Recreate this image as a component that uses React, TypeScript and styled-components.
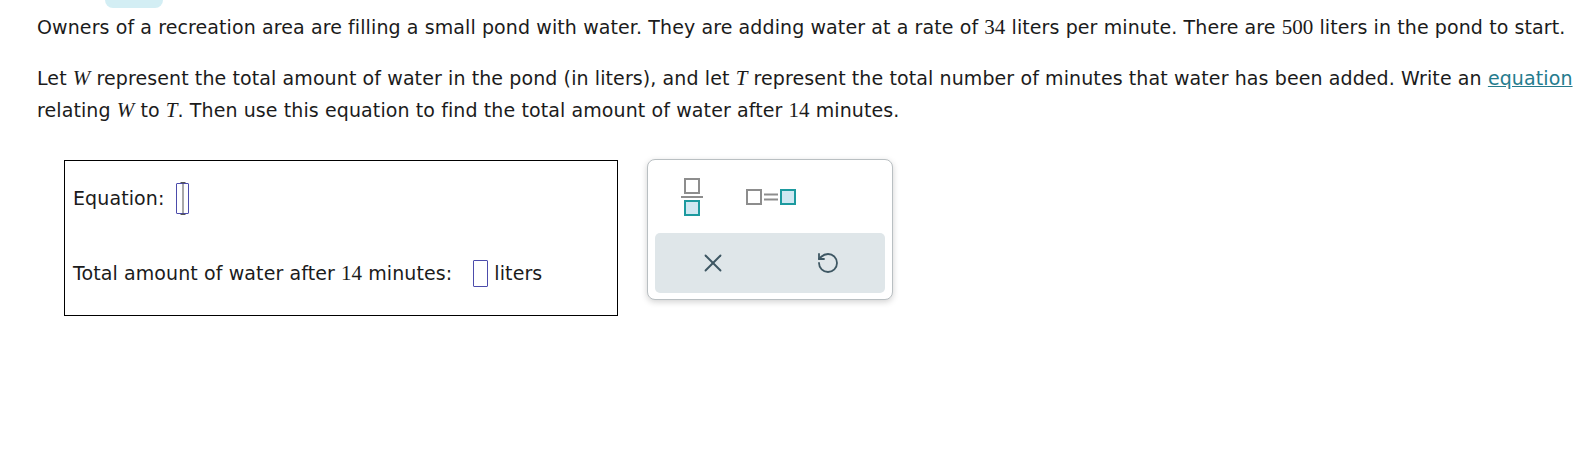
import styled, { createGlobalStyle } from "styled-components";
import { X, RotateCcw } from "lucide-react";

const GlobalStyle = createGlobalStyle`
  html, body {
    margin: 0;
    padding: 0;
    background: #ffffff;
  }
  body {
    font-family: "DejaVu Sans", Verdana, sans-serif;
    color: #1b1b1b;
  }
`;

const Page = styled.div`
  width: 1578px;
  height: 451px;
  overflow: hidden;
  padding-left: 37px;
  box-sizing: border-box;
`;

const TopTab = styled.div`
  width: 58px;
  height: 8px;
  margin-left: 68px;
  border-radius: 0 0 12px 12px;
  background: #d3eef4;
`;

const Question = styled.p<{ $gap?: number }>`
  margin: ${(p) => p.$gap ?? 0}px 0 0 0;
  font-size: 19px;
  letter-spacing: 0.1px;
  line-height: 32px;
  max-width: 1538px;
`;

const M = styled.span<{ $it?: boolean }>`
  font-family: "Liberation Serif", "Times New Roman", serif;
  font-style: ${(p) => (p.$it ? "italic" : "normal")};
  font-size: 21px;
  letter-spacing: 0;
`;

const Link = styled.a`
  color: #257b8d;
  text-decoration: underline;
`;

const AnswerRow = styled.div`
  display: flex;
  align-items: flex-start;
  gap: 29px;
  margin: 34px 0 0 27px;
`;

const AnswerBox = styled.div`
  width: 554px;
  height: 156px;
  box-sizing: border-box;
  border: 1.5px solid #000;
  padding: 21px 0 0 8px;
  font-size: 19px;
  letter-spacing: 0.1px;
`;

const Line = styled.div<{ $gap?: number }>`
  display: flex;
  align-items: center;
  height: 32px;
  margin-top: ${(p) => p.$gap ?? 0}px;
`;

const Blank = styled.span<{ $w: number; $h: number; $ml: number; $mr?: number }>`
  position: relative;
  display: inline-block;
  width: ${(p) => p.$w}px;
  height: ${(p) => p.$h}px;
  margin-left: ${(p) => p.$ml}px;
  margin-right: ${(p) => p.$mr ?? 0}px;
  box-sizing: border-box;
  border: 1.5px solid #4c4cab;
  border-radius: 1px;
`;

const Caret = styled.span`
  position: absolute;
  left: 50%;
  top: -2px;
  bottom: -2px;
  width: 1px;
  background: #555;
  transform: translateX(-50%);
  &::before,
  &::after {
    content: "";
    position: absolute;
    left: -2px;
    width: 5px;
    height: 1px;
    background: #555;
  }
  &::before { top: 0; }
  &::after { bottom: 0; }
`;

const Keypad = styled.div`
  width: 246px;
  height: 141px;
  margin-top: -1px;
  box-sizing: border-box;
  border: 1px solid #b9bfc2;
  border-radius: 8px;
  background: #fff;
  box-shadow: 0 2px 6px rgba(0, 0, 0, 0.18);
  display: flex;
  flex-direction: column;
  padding: 0 7px 6px 7px;
`;

const KeyRow = styled.div`
  flex: 1;
  display: flex;
  align-items: center;
  padding-left: 25px;
  gap: 42px;
`;

const KeyButton = styled.button`
  border: 0;
  background: transparent;
  padding: 0;
  display: flex;
  align-items: center;
  justify-content: center;
  cursor: pointer;
`;

const ActionArea = styled.div`
  height: 60px;
  border-radius: 5px;
  background: #dfe6e9;
  display: grid;
  grid-template-columns: 1fr 1fr;
`;

const ActionButton = styled.button`
  border: 0;
  background: transparent;
  display: flex;
  align-items: center;
  justify-content: center;
  color: #3e5763;
  cursor: pointer;
`;

const FractionIcon = () => (
  <svg width="24" height="38" viewBox="0 0 24 38">
    <rect x="5" y="1" width="14" height="14" fill="#fff" stroke="#8d8d8d" strokeWidth="2" />
    <line x1="1" y1="19" x2="23" y2="19" stroke="#8d8d8d" strokeWidth="2" />
    <rect x="5" y="23" width="14" height="14" fill="#cfe8f2" stroke="#1c9a9f" strokeWidth="2" />
  </svg>
);

const EqualsIcon = () => (
  <svg width="50" height="16" viewBox="0 0 50 16">
    <rect x="1" y="1" width="14" height="14" fill="#fff" stroke="#8d8d8d" strokeWidth="2" />
    <line x1="18" y1="5.5" x2="32" y2="5.5" stroke="#8d8d8d" strokeWidth="2" />
    <line x1="18" y1="10.5" x2="32" y2="10.5" stroke="#8d8d8d" strokeWidth="2" />
    <rect x="35" y="1" width="14" height="14" fill="#cfe8f2" stroke="#1c9a9f" strokeWidth="2" />
  </svg>
);

export default function App() {
  return (
    <>
      <GlobalStyle />
      <Page>
        <TopTab />
        <Question $gap={3}>
          Owners of a recreation area are filling a small pond with water. They are adding water at a rate of{" "}
          <M>34</M> liters per minute. There are <M>500</M> liters in the pond to start.
        </Question>
        <Question $gap={19}>
          Let <M $it>W</M> represent the total amount of water in the pond (in liters), and let <M $it>T</M>{" "}
          represent the total number of minutes that water has been added. Write an <Link href="#">equation</Link>{" "}
          relating <M $it>W</M> to <M $it>T</M>. Then use this equation to find the total amount of water after{" "}
          <M>14</M> minutes.
        </Question>
        <AnswerRow>
          <AnswerBox>
            <Line>
              Equation:
              <Blank $w={13} $h={31} $ml={12}>
                <Caret />
              </Blank>
            </Line>
            <Line $gap={43}>
              Total amount of water after&nbsp;<M>14</M>&nbsp;minutes:
              <Blank $w={15} $h={27} $ml={21} $mr={6} />
              liters
            </Line>
          </AnswerBox>
          <Keypad>
            <KeyRow>
              <KeyButton aria-label="fraction">
                <FractionIcon />
              </KeyButton>
              <KeyButton aria-label="equals">
                <EqualsIcon />
              </KeyButton>
            </KeyRow>
            <ActionArea>
              <ActionButton aria-label="clear">
                <X size={30} strokeWidth={1.5} />
              </ActionButton>
              <ActionButton aria-label="undo">
                <RotateCcw size={24} strokeWidth={1.8} />
              </ActionButton>
            </ActionArea>
          </Keypad>
        </AnswerRow>
      </Page>
    </>
  );
}
